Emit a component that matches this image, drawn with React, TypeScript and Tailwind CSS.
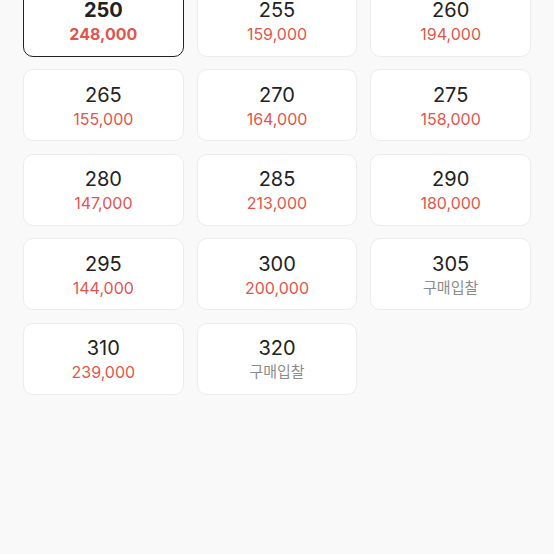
import React from 'react';

interface SizeItem {
  size: number;
  price?: string;
}

const sizes: SizeItem[] = [
  { size: 250, price: '248,000' },
  { size: 255, price: '159,000' },
  { size: 260, price: '194,000' },
  { size: 265, price: '155,000' },
  { size: 270, price: '164,000' },
  { size: 275, price: '158,000' },
  { size: 280, price: '147,000' },
  { size: 285, price: '213,000' },
  { size: 290, price: '180,000' },
  { size: 295, price: '144,000' },
  { size: 300, price: '200,000' },
  { size: 305 },
  { size: 310, price: '239,000' },
  { size: 320 },
];

const SizeCard: React.FC<{ item: SizeItem; selected: boolean }> = ({ item, selected }) => (
  <button
    className={`h-[72px] pt-[3px] rounded-[10px] bg-white flex flex-col items-center justify-center ${
      selected ? 'border-[1.5px] border-[#222]' : 'border border-[#ececec]'
    }`}
  >
    <span className={`text-[20px] leading-[24px] text-[#222] ${selected ? 'font-bold' : ''}`}>{item.size}</span>
    {item.price ? (
      <span className={`text-[16px] leading-[24px] text-[#df564e] ${selected ? 'font-bold' : ''}`}>{item.price}</span>
    ) : (
      <span className="text-[15px] leading-[24px] text-[#8b8b8b]">구매입찰</span>
    )}
  </button>
);

export default function App() {
  return (
    <div
      className="w-[554px] h-[554px] overflow-hidden bg-[#f9f9f9]"
      style={{ fontFamily: 'Inter, "Noto Sans CJK KR", sans-serif' }}
    >
      <div className="grid grid-cols-3 gap-x-[13px] gap-y-[12.5px] px-[23px] mt-[-15.5px]">
        {sizes.map((s, i) => (
          <SizeCard key={s.size} item={s} selected={i === 0} />
        ))}
      </div>
    </div>
  );
}
